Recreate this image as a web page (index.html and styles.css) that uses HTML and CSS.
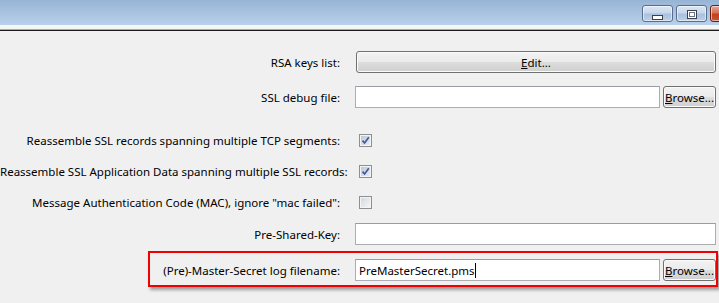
FILE: index.html
```html
<!DOCTYPE html>
<html>
<head>
<meta charset="utf-8">
<link rel="stylesheet" href="styles.css">
</head>
<body>
<div class="window">
  <div class="titlebar">
    <div class="caption-buttons">
      <span class="cap min"><i class="glyph-min"></i></span>
      <span class="cap max"><i class="glyph-max"></i></span>
      <span class="cap close"></span>
    </div>
  </div>
  <div class="strip"></div>
  <div class="rule"></div>
  <div class="content">
    <div class="row row-input">
      <label class="lbl">RSA keys list:</label>
      <div class="ctl"><button class="btn btn-wide"><u>E</u>dit...</button></div>
    </div>
    <div class="row row-input gap-13">
      <label class="lbl">SSL debug file:</label>
      <div class="ctl"><div class="field"></div><button class="btn btn-browse"><u>B</u>rowse...</button></div>
    </div>
    <div class="row row-check gap-17">
      <label class="lbl">Reassemble SSL records spanning multiple TCP segments:</label>
      <div class="ctl"><span class="check on"><svg width="9" height="9" viewBox="0 0 9 9"><path d="M1.5 4.6 L3.6 7 L7.8 1.3" fill="none" stroke="#3e5ba2" stroke-width="1.7"/></svg></span></div>
    </div>
    <div class="row row-check">
      <label class="lbl">Reassemble SSL Application Data spanning multiple SSL records:</label>
      <div class="ctl"><span class="check on"><svg width="9" height="9" viewBox="0 0 9 9"><path d="M1.5 4.6 L3.6 7 L7.8 1.3" fill="none" stroke="#3e5ba2" stroke-width="1.7"/></svg></span></div>
    </div>
    <div class="row row-check">
      <label class="lbl">Message Authentication Code (MAC), ignore "mac failed":</label>
      <div class="ctl"><span class="check"></span></div>
    </div>
    <div class="row row-input gap-5">
      <label class="lbl">Pre-Shared-Key:</label>
      <div class="ctl"><div class="field"></div></div>
    </div>
    <div class="row row-input highlight">
      <label class="lbl">(Pre)-Master-Secret log filename:</label>
      <div class="ctl"><div class="field"><span class="value">PreMasterSecret.pms</span><span class="caret"></span></div><button class="btn btn-browse"><u>B</u>rowse...</button></div>
    </div>
  </div>
</div>
</body>
</html>
```
FILE: styles.css
```css
html, body {
  margin: 0;
  padding: 0;
}
body {
  background: #f0f0f0;
  font-family: "Noto Sans", "Open Sans", sans-serif;
  font-size: 11.5px;
  color: #000;
  width: 719px;
  height: 303px;
  overflow: hidden;
}
.titlebar {
  height: 25px;
  background: linear-gradient(#98b4d5, #b9d1ea);
  display: flex;
  justify-content: flex-end;
  overflow: hidden;
}
.caption-buttons {
  display: flex;
  gap: 3px;
  padding-top: 5px;
  margin-right: -34px;
}
.cap {
  box-sizing: border-box;
  width: 31px;
  height: 17px;
  border: 1px solid #5b6d8d;
  border-radius: 3px;
  background: linear-gradient(#dce7f4 0%, #c7d7ec 45%, #a9c0de 55%, #bdd0e8 100%);
  box-shadow: inset 0 0 0 1px rgba(255, 255, 255, 0.55);
  display: flex;
  align-items: center;
  justify-content: center;
}
.cap.close {
  width: 43px;
  border-color: #6e2010;
  background: linear-gradient(#e9a696 0%, #d67158 45%, #c0401f 55%, #c9553a 100%);
}
.glyph-min {
  display: block;
  box-sizing: border-box;
  width: 11px;
  height: 5px;
  margin-top: 7px;
  border: 1px solid #3a4250;
  background: #fff;
}
.glyph-max {
  display: block;
  box-sizing: border-box;
  width: 10px;
  height: 9px;
  margin-top: 1px;
  border: 1px solid #3a4250;
  background: #fff;
  box-shadow: inset 0 0 0 1px #fff, inset 0 0 0 2px #6a7283;
}
.strip {
  height: 4px;
  background: #f6f6f6;
  border-bottom: 1px solid #a8a8a8;
}
.rule {
  height: 1px;
  background: #1c1c1c;
}
.content {
  padding-top: 20px;
}
.row {
  display: flex;
  align-items: center;
}
.row-input {
  height: 22px;
}
.row-check {
  height: 31px;
}
.gap-13 { margin-top: 13px; }
.gap-17 { margin-top: 17px; }
.gap-5 { margin-top: 5px; }
.lbl {
  flex: none;
  width: 340px;
  text-align: right;
  white-space: nowrap;
}
.ctl {
  flex: none;
  width: 361px;
  margin-left: 15px;
  display: flex;
  align-items: center;
  gap: 3px;
}
.field {
  box-sizing: border-box;
  flex: 1;
  height: 22px;
  background: #fff;
  border: 1px solid #abadb3;
  border-top-color: #9a9ca4;
  display: flex;
  align-items: center;
  padding-left: 3px;
  color: #000;
}
.caret {
  display: inline-block;
  width: 1px;
  height: 15px;
  background: #000;
}
.btn {
  box-sizing: border-box;
  height: 22px;
  margin: 0;
  padding: 0;
  font: inherit;
  color: #000;
  border: 1px solid #707070;
  border-radius: 3px;
  background: linear-gradient(#f2f2f2 0%, #ebebeb 48%, #dddddd 52%, #cfcfcf 100%);
  box-shadow: inset 0 0 0 1px #fbfbfb;
}
.btn-wide {
  width: 361px;
  margin-left: 1px;
}
.btn-browse {
  flex: none;
  width: 53px;
}
.check {
  box-sizing: border-box;
  width: 13px;
  height: 13px;
  margin-left: 4px;
  border: 1px solid #8e8f8f;
  background: linear-gradient(135deg, #d2d6dc, #f6f7f8);
  box-shadow: inset 0 0 0 1px #f4f4f4;
  display: flex;
  align-items: center;
  justify-content: center;
}
.check.on {
  background: linear-gradient(135deg, #b9c4d4, #eef1f5);
}
.highlight {
  box-sizing: border-box;
  height: 36px;
  width: 570px;
  margin-top: 6px;
  margin-left: 148px;
  padding-top: 2px;
  border: 2px solid #f00000;
  box-shadow: 2px 3px 3px rgba(0, 0, 0, 0.35);
}
.highlight .lbl {
  width: 190px;
}
```
